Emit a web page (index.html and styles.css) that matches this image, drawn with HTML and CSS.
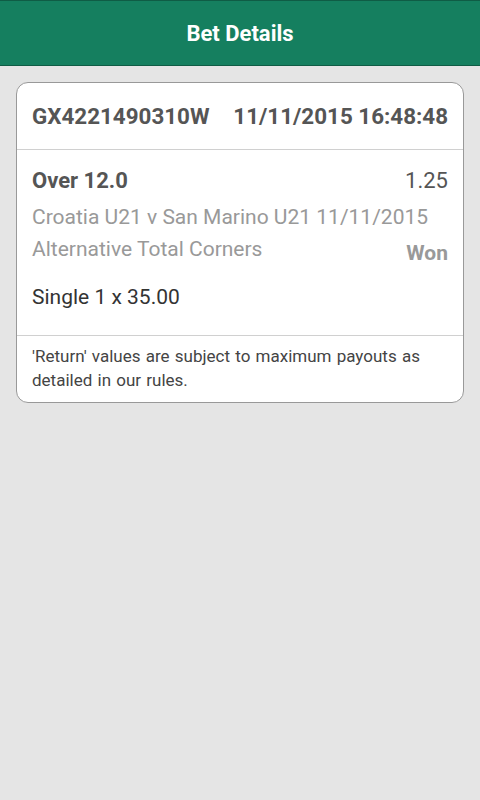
FILE: index.html
```html
<!DOCTYPE html>
<html lang="en">
<head>
  <meta charset="UTF-8">
  <meta name="viewport" content="width=device-width, initial-scale=1.0">
  <title>Bet Details</title>
  <link rel="stylesheet" href="styles.css">
</head>
<body>
  <header class="topbar">
    <h1>Bet Details</h1>
  </header>

  <div class="bet-card">
    <div class="bet-head">
      <span class="bet-ref">GX4221490310W</span>
      <span class="bet-time">11/11/2015 16:48:48</span>
    </div>

    <div class="bet-body">
      <div class="row">
        <span class="selection">Over 12.0</span>
        <span class="odds">1.25</span>
      </div>
      <div class="event">Croatia U21 v San Marino U21 11/11/2015</div>
      <div class="row">
        <span class="market">Alternative Total Corners</span>
        <span class="result">Won</span>
      </div>
      <div class="stake">Single 1 x 35.00</div>
    </div>

    <div class="bet-foot">
      'Return' values are subject to maximum payouts as detailed in our rules.
    </div>
  </div>
</body>
</html>
```

FILE: styles.css
```css
body {
  margin: 0;
  font-family: Roboto, 'Noto Sans', sans-serif;
  background: #e5e5e5;
  color: #333;
}

.topbar {
  background: #157f5f;
  border-top: 1px solid #0f5c45;
  border-bottom: 1px solid #0f5c45;
  height: 64px;
  display: flex;
  align-items: center;
  justify-content: center;
}

.topbar h1 {
  margin: 0;
  color: #fff;
  font-size: 22px;
  font-weight: bold;
}

.bet-card {
  margin: 16px 16px;
  background: #fff;
  border: 1px solid #999;
  border-radius: 12px;
}

.bet-head {
  display: flex;
  justify-content: space-between;
  align-items: center;
  height: 66px;
  padding: 0 15px;
  border-bottom: 1px solid #d0d0d0;
  font-size: 22.4px;
  font-weight: bold;
  color: #555;
}

.bet-body {
  padding: 15px 15px 22px;
  border-bottom: 1px solid #d0d0d0;
  line-height: 32px;
}

.row {
  display: flex;
  justify-content: space-between;
  align-items: baseline;
}

.selection {
  font-size: 22px;
  font-weight: bold;
  color: #555;
}

.odds {
  font-size: 22px;
  color: #555;
}

.event, .market {
  font-size: 21px;
  color: #999;
}

.event {
  margin-top: 4px;
}

.result {
  font-size: 21px;
  font-weight: bold;
  color: #999;
  position: relative;
  top: 4px;
}

.stake {
  margin-top: 16px;
  font-size: 21px;
  color: #333;
}

.bet-foot {
  padding: 8px 15px 10px;
  font-size: 17px;
  line-height: 24px;
  word-spacing: 1px;
  color: #444;
}
```
